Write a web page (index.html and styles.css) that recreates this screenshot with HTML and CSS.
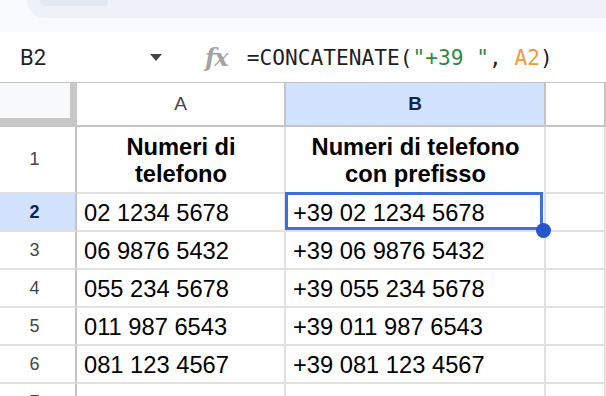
FILE: index.html
```html
<!DOCTYPE html>
<html lang="it">
<head>
  <meta charset="UTF-8">
  <meta name="viewport" content="width=device-width, initial-scale=1.0">
  <title>Foglio</title>
  <link rel="stylesheet" href="styles.css">
</head>
<body>
  <div class="topbar">
    <div class="toolbar">
      <div class="toolbar-tab"></div>
    </div>
  </div>

  <div class="formula-bar">
    <div class="name-box">
      <span class="cell-ref">B2</span>
      <span class="caret"></span>
    </div>
    <span class="fx">fx</span>
    <div class="formula">=CONCATENATE(<span class="str">"+39 "</span>, <span class="ref">A2</span>)</div>
  </div>

  <div class="sheet">
    <div class="corner"></div>
    <div class="col-head">A</div>
    <div class="col-head active">B</div>
    <div class="col-head"></div>

    <div class="row-head">1</div>
    <div class="cell title">Numeri di<br>telefono</div>
    <div class="cell title">Numeri di telefono<br>con prefisso</div>
    <div class="cell"></div>

    <div class="row-head active">2</div>
    <div class="cell">02 1234 5678</div>
    <div class="cell selected">+39 02 1234 5678</div>
    <div class="cell"></div>

    <div class="row-head">3</div>
    <div class="cell">06 9876 5432</div>
    <div class="cell">+39 06 9876 5432</div>
    <div class="cell"></div>

    <div class="row-head">4</div>
    <div class="cell">055 234 5678</div>
    <div class="cell">+39 055 234 5678</div>
    <div class="cell"></div>

    <div class="row-head">5</div>
    <div class="cell">011 987 6543</div>
    <div class="cell">+39 011 987 6543</div>
    <div class="cell"></div>

    <div class="row-head">6</div>
    <div class="cell">081 123 4567</div>
    <div class="cell">+39 081 123 4567</div>
    <div class="cell"></div>

    <div class="row-head">7</div>
    <div class="cell"></div>
    <div class="cell"></div>
    <div class="cell"></div>
  </div>
</body>
</html>
```

FILE: styles.css
```css
* {
    margin: 0;
    padding: 0;
    box-sizing: border-box;
}

:root {
    --chrome-background: #f8fafd;
    --toolbar-background: #eef2f8;
    --tab-background: #e3e9f3;
    --header-border: #c4c4c4;
    --grid-border: #e1e1e1;
    --header-text: #444746;
    --active-background: #d3e3fd;
    --active-text: #0f2350;
    --selection: #3f6fd9;
    --handle: #2756c9;
}

body {
    font-family: "Liberation Sans", Arial, sans-serif;
    background: white;
    color: #000;
    width: 606px;
    height: 396px;
    overflow: hidden;
}

.topbar {
    height: 32px;
    background: var(--chrome-background);
    padding-left: 27px;
}

.toolbar {
    height: 18px;
    background: var(--toolbar-background);
    border-bottom-left-radius: 18px;
    padding-left: 13px;
}

.toolbar-tab {
    width: 68px;
    height: 6px;
    background: var(--tab-background);
    border-radius: 0 0 4px 4px;
}

.formula-bar {
    height: 51px;
    display: flex;
    align-items: center;
    padding-left: 20px;
    border-bottom: 1px solid var(--header-border);
}

.name-box {
    width: 142px;
    display: flex;
    align-items: center;
    justify-content: space-between;
}

.cell-ref {
    font-family: Roboto, "Liberation Sans", sans-serif;
    font-size: 22px;
    color: #1f1f1f;
}

.caret {
    width: 0;
    height: 0;
    border-left: 6.5px solid transparent;
    border-right: 6.5px solid transparent;
    border-top: 7px solid #444746;
}

.fx {
    margin-left: 43px;
    font-family: "DejaVu Serif", "Liberation Serif", serif;
    font-style: italic;
    font-weight: bold;
    font-size: 24px;
    color: #a3a3a3;
    letter-spacing: -1px;
}

.formula {
    margin-left: 19px;
    font-family: "DejaVu Sans Mono", "Liberation Mono", monospace;
    font-size: 21.2px;
    color: #1f1f1f;
    white-space: pre;
}

.formula .str {
    color: #2f8a3e;
}

.formula .ref {
    color: #ef9a3c;
}

.sheet {
    display: grid;
    grid-template-columns: 77px 209px 260px 1fr;
    grid-template-rows: 44px 67px repeat(7, 38px);
}

.corner {
    background: #f8f9fa;
    border-right: 7px solid #c7c7c7;
    border-bottom: 9px solid #c7c7c7;
}

.col-head {
    display: flex;
    align-items: center;
    justify-content: center;
    font-size: 19px;
    color: var(--header-text);
    border-right: 2px solid var(--header-border);
    border-bottom: 2px solid var(--header-border);
}

.row-head {
    display: flex;
    align-items: center;
    justify-content: center;
    padding-right: 6px;
    font-size: 18px;
    color: var(--header-text);
    border-right: 2px solid var(--header-border);
    border-bottom: 2px solid var(--grid-border);
}

.col-head.active,
.row-head.active {
    background: var(--active-background);
    color: var(--active-text);
    font-weight: bold;
}

.cell {
    display: flex;
    align-items: flex-end;
    padding: 0 6px 3px 7px;
    font-size: 23.7px;
    line-height: 27px;
    white-space: nowrap;
    border-right: 2px solid var(--grid-border);
    border-bottom: 2px solid var(--grid-border);
}

.cell.title {
    justify-content: center;
    text-align: center;
    font-weight: bold;
    padding-bottom: 4px;
}

.cell.selected {
    position: relative;
    z-index: 1;
}

.cell.selected::after {
    content: "";
    position: absolute;
    top: -2px;
    left: -1px;
    right: 1px;
    bottom: 0;
    border: 3px solid var(--selection);
}

.cell.selected::before {
    content: "";
    position: absolute;
    right: -7px;
    bottom: -8px;
    width: 15px;
    height: 15px;
    border-radius: 50%;
    background: var(--handle);
    z-index: 2;
}
```
